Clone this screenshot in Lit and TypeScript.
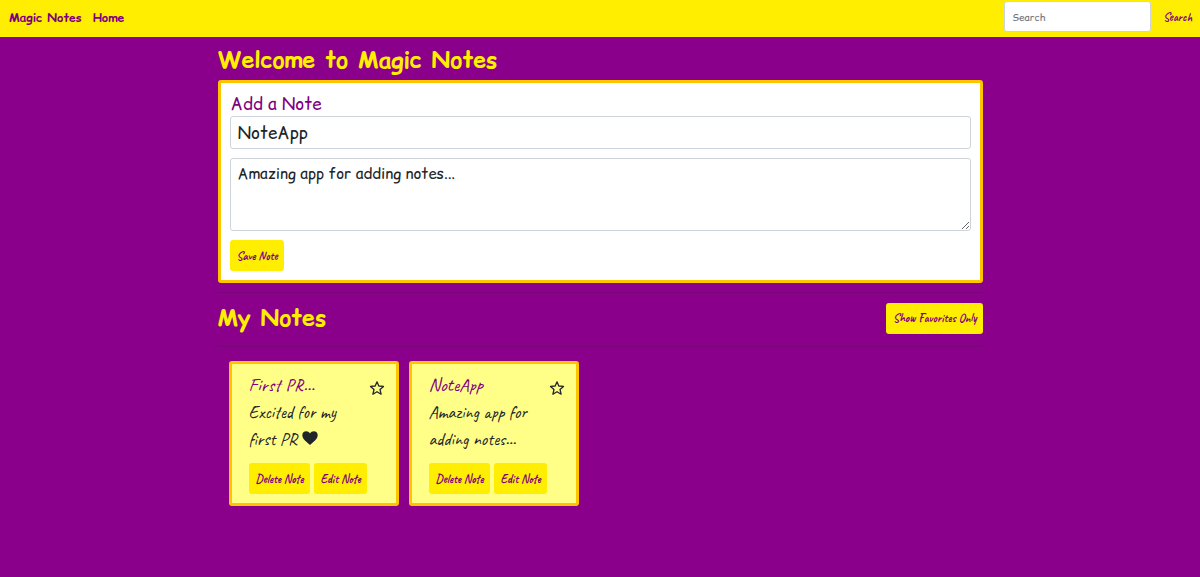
import { LitElement, html, css } from "lit";
import { customElement, property, state } from "lit/decorators.js";

interface Note {
  title: string;
  text: string;
  heart?: boolean;
}

const handwriting = css`"Caveat", "Lato", "Liberation Sans", sans-serif`;
const comic = css`"Comic Sans MS", "Comic Relief", "Comic Neue", "Lato", "Liberation Sans", sans-serif`;

const buttonStyles = css`
  .btn {
    height: 31px;
    padding: 0 6px 0 7px;
    border: 0;
    border-radius: 3px;
    background: #ffee00;
    color: #800080;
    font: 700 12px/16px ${handwriting};
    white-space: nowrap;
    cursor: pointer;
  }
`;

@customElement("note-card")
export class NoteCard extends LitElement {
  @property({ attribute: false }) note!: Note;

  static styles = [
    buttonStyles,
    css`
      :host {
        display: block;
        box-sizing: border-box;
        width: 170px;
        padding: 7px 11px 9px 17px;
        border: 3px solid #ffc400;
        border-radius: 3px;
        background: #ffff88;
      }
      .head {
        display: flex;
        justify-content: space-between;
        align-items: flex-start;
      }
      .title {
        margin: 0;
        color: #800080;
        font: 400 19px/28px ${handwriting};
      }
      .star {
        display: block;
        margin-top: 9px;
        padding: 0;
        border: 0;
        background: none;
        line-height: 0;
        cursor: pointer;
      }
      .text {
        margin: 0 0 10px;
        padding-right: 24px;
        color: #212529;
        font: 400 18px/27px ${handwriting};
      }
      .heart {
        margin-left: 1px;
      }
      .actions {
        display: flex;
        gap: 4px;
      }
    `,
  ];

  render() {
    return html`
      <div class="head">
        <h3 class="title">${this.note.title}</h3>
        <button class="star" aria-label="Favorite">
          <svg width="16" height="16" viewBox="0 0 16 16" fill="none" stroke="#212529" stroke-width="1.3" stroke-linejoin="round">
            <path d="M8 1.800 9.800 6 14.500 6.400 11 9.500 12.100 14.200 8 11.700 3.900 14.200 5 9.500 1.500 6.400 6.200 6Z" />
          </svg>
        </button>
      </div>
      <p class="text">
        ${this.note.text}
        ${this.note.heart
          ? html`<svg class="heart" role="img" aria-label="heart" width="16" height="14" viewBox="0 0 16 14" fill="#212529">
              <path d="M8 14C5.400 11.300.3 8.300.3 4.200.3 1.800 2 .2 4.100.2 5.800.2 7.200 1 8 2.600 8.800 1 10.200.2 11.900.2c2.100 0 3.800 1.600 3.800 4C15.700 8.300 10.600 11.300 8 14Z" />
            </svg>`
          : ""}
      </p>
      <div class="actions">
        <button class="btn">Delete Note</button>
        <button class="btn">Edit Note</button>
      </div>
    `;
  }
}

@customElement("app-root")
export class AppRoot extends LitElement {
  @state() private notes: Note[] = [
    { title: "First PR...", text: "Excited for my first PR", heart: true },
    { title: "NoteApp", text: "Amazing app for adding notes..." },
  ];

  static styles = [
    buttonStyles,
    css`
      :host {
        display: block;
        min-height: 100vh;
        background: #8b008b;
        font-family: ${comic};
      }
      .nav {
        display: flex;
        align-items: center;
        gap: 11px;
        height: 37px;
        padding: 0 2px 0 9px;
        background: #ffee00;
      }
      .link {
        padding-bottom: 2px;
        color: #800080;
        font-size: 12px;
        line-height: 18px;
        font-weight: 700;
        text-decoration: none;
      }
      .search {
        display: flex;
        align-self: flex-start;
        gap: 5px;
        margin: 1px 0 0 auto;
      }
      .field {
        display: block;
        box-sizing: border-box;
        width: 100%;
        height: 33px;
        padding: 0 7px;
        border: 1px solid #ced4da;
        border-radius: 3px;
        background: #fff;
        color: #212529;
        font: 400 17px/24px ${comic};
      }
      .field.small {
        width: 147px;
        height: 31px;
        font-size: 10px;
      }
      .field::placeholder {
        color: #6c757d;
        opacity: 1;
      }
      .field.area {
        height: 73px;
        margin: 9px 0;
        padding: 3px 7px;
        font-size: 15px;
        resize: vertical;
      }
      .page {
        max-width: 765px;
        margin: 0 auto;
        padding: 7px 16px 0;
      }
      .heading {
        margin: 0;
        color: #ffee00;
        font-size: 23px;
        line-height: 32px;
        font-weight: 700;
      }
      .form {
        margin: 4px 0 9px;
        padding: 9px;
        border: 3px solid #ffc400;
        border-radius: 3px;
        background: #fff;
      }
      .label {
        display: block;
        padding-left: 1px;
        color: #800080;
        font-size: 17px;
        line-height: 24px;
      }
      .rule {
        height: 1px;
        margin: 0;
        border: 0;
        background: #7a057a;
      }
      .bar {
        display: flex;
        justify-content: space-between;
        align-items: center;
        padding: 9px 0 12px;
      }
      .notes {
        display: flex;
        flex-wrap: wrap;
        align-items: flex-start;
        gap: 10px;
        padding: 14px 11px;
      }
    `,
  ];

  render() {
    return html`
      <nav class="nav">
        <a class="link" href="#">Magic Notes</a>
        <a class="link" href="#">Home</a>
        <form class="search">
          <input class="field small" type="search" placeholder="Search" aria-label="Search" />
          <button class="btn" type="button">Search</button>
        </form>
      </nav>
      <main class="page">
        <h1 class="heading">Welcome to Magic Notes</h1>
        <form class="form">
          <label class="label" for="title">Add a Note</label>
          <input class="field" id="title" type="text" .value=${"NoteApp"} />
          <textarea class="field area" aria-label="Note text" .value=${"Amazing app for adding notes..."}></textarea>
          <button class="btn" type="button">Save Note</button>
        </form>
        <hr class="rule" />
        <div class="bar">
          <h2 class="heading">My Notes</h2>
          <button class="btn">Show Favorites Only</button>
        </div>
        <hr class="rule" />
        <section class="notes">
          ${this.notes.map((note) => html`<note-card .note=${note}></note-card>`)}
        </section>
      </main>
    `;
  }
}
